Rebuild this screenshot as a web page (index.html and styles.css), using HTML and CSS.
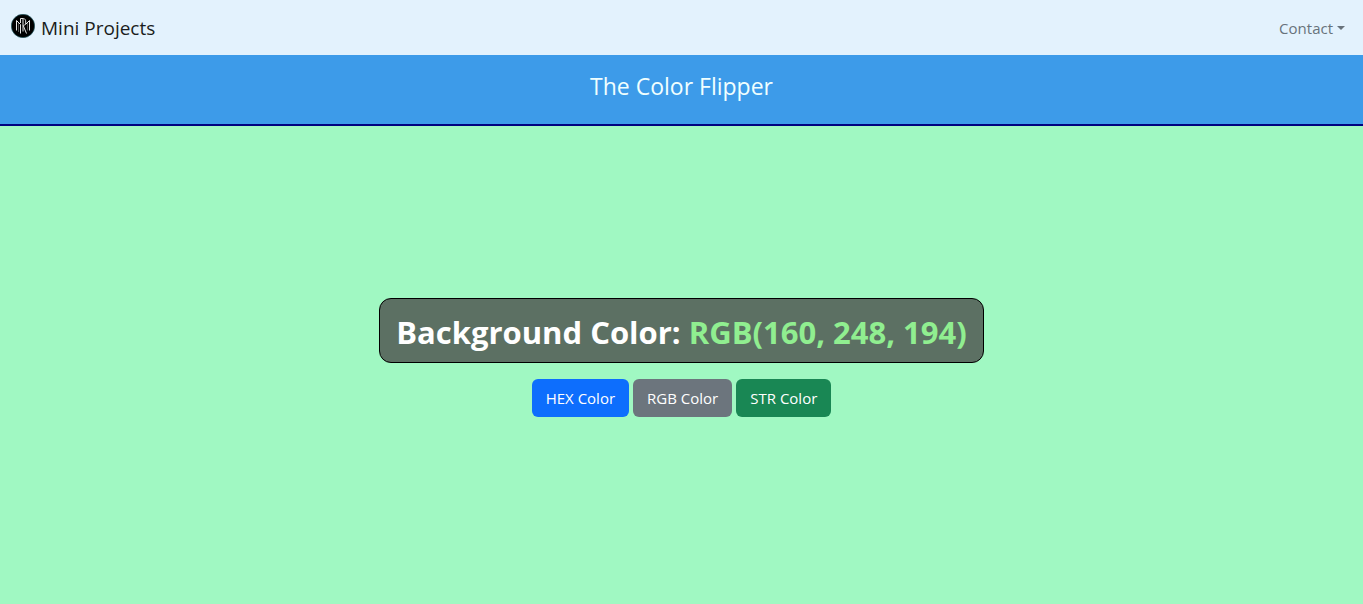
FILE: index.html
```html
<!DOCTYPE html>
<html lang="en">
<head>
<meta charset="utf-8">
<meta name="viewport" content="width=device-width, initial-scale=1">
<title>The Color Flipper</title>
<link rel="stylesheet" href="styles.css">
</head>
<body>
<nav class="navbar">
  <a class="brand" href="#">
    <svg class="logo" viewBox="0 0 24 24" aria-hidden="true">
      <circle cx="12" cy="12" r="11.7" fill="#000" stroke="#286a72" stroke-width=".6"/>
      <g fill="none" stroke="#e4e4e4" stroke-width="1">
        <path d="M5.5 16.5V6.5L9.5 10.5V19.5M18.5 16.5V6.5L14.5 10.5"/>
        <path d="M9.5 9V4.5H12.5C15.5 4.5 15.5 11.5 12.5 11.5M12 5V17.5M12.2 11.5L15.5 19.5"/>
        <path d="M7.5 9V18M16.5 9V16.5" stroke="#888" stroke-width=".6"/>
      </g>
    </svg>
    <span>Mini Projects</span>
  </a>
  <button class="dropdown" type="button" aria-haspopup="true">Contact</button>
</nav>
<header class="banner"><h1 class="title">The Color Flipper</h1></header>
<main class="flipper">
  <h2 class="readout">Background Color: <span class="value">RGB(160, 248, 194)</span></h2>
  <div class="actions">
    <button class="btn btn-hex" type="button">HEX Color</button>
    <button class="btn btn-rgb" type="button">RGB Color</button>
    <button class="btn btn-str" type="button">STR Color</button>
  </div>
</main>
</body>
</html>
```
FILE: styles.css
```css
*, *::before, *::after { box-sizing: border-box; }

body {
  display: flex;
  flex-direction: column;
  min-height: 100vh;
  margin: 0;
  background: #a0f8c2;
  font-family: "Segoe UI", "Open Sans", "Noto Sans", sans-serif;
  font-size: 15px;
  line-height: 24px;
}

.navbar {
  display: flex;
  align-items: center;
  justify-content: space-between;
  padding: 13px 18px 12px 11px;
  background: #e3f2fd;
}

.brand {
  display: flex;
  gap: 6px;
  color: #1a1d20;
  font-size: 19px;
  line-height: 30px;
  text-decoration: none;
}

.logo {
  width: 24px;
  height: 24px;
  margin-top: 1px;
}

.dropdown {
  display: flex;
  align-items: center;
  gap: 4px;
  padding: 0;
  border: 0;
  background: none;
  color: #68727b;
  font: inherit;
}

.dropdown::after {
  content: "";
  border: 4px solid transparent;
  border-top-color: currentColor;
  border-bottom: 0;
}

.banner {
  padding: 16px 12px 22px;
  border-bottom: 2px solid #000080;
  background: #3d9be9;
  color: #f0ffff;
  text-align: center;
}

.title {
  margin: 0;
  font-size: 23px;
  font-weight: 400;
  line-height: 31px;
}

.flipper {
  display: flex;
  flex: 1;
  flex-direction: column;
  align-items: center;
  justify-content: center;
  gap: 16px;
  padding-bottom: 15px;
}

.readout {
  margin: 0;
  padding: 14px 16px 11px;
  border: 1px solid #000;
  border-radius: 12px;
  background: #5c7063;
  color: #fff;
  font-size: 31px;
  font-weight: 700;
  line-height: 38px;
}

.value { color: #90ee90; }

.actions {
  display: flex;
  gap: 4px;
}

.btn {
  padding: 7px 14px;
  border: 0;
  border-radius: 6px;
  color: #fff;
  font: inherit;
}

.btn-hex { background: #0d6efd; }
.btn-rgb { background: #6c757d; }
.btn-str { background: #198754; }
```
